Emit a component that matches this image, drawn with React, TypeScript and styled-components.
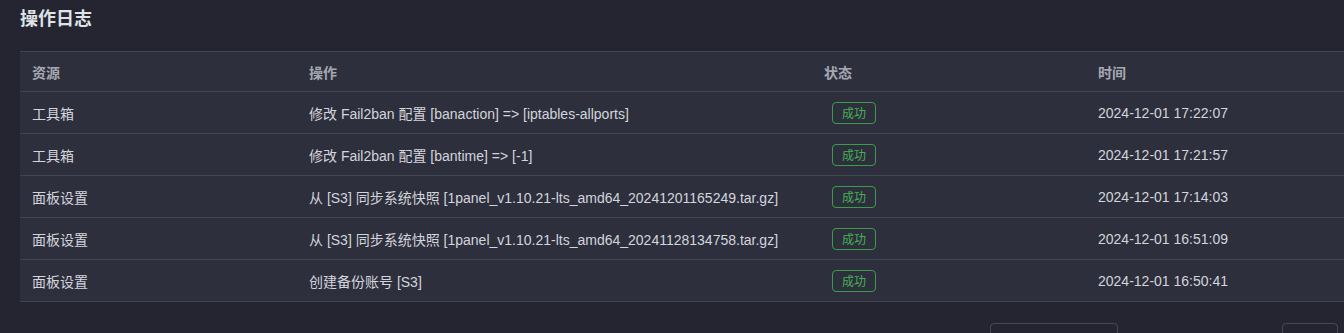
import styled, { createGlobalStyle } from 'styled-components'

const GlobalStyle = createGlobalStyle`
  html, body {
    margin: 0;
    padding: 0;
    background: #242530;
    overflow: hidden;
  }
  body {
    font-family: 'Liberation Sans', Arial, 'Noto Sans CJK SC', sans-serif;
  }
`

interface LogRow {
  source: string
  action: string
  status: string
  time: string
}

const logs: LogRow[] = [
  { source: '工具箱', action: '修改 Fail2ban 配置 [banaction] => [iptables-allports]', status: '成功', time: '2024-12-01 17:22:07' },
  { source: '工具箱', action: '修改 Fail2ban 配置 [bantime] => [-1]', status: '成功', time: '2024-12-01 17:21:57' },
  {
    source: '面板设置',
    action: '从 [S3] 同步系统快照 [1panel_v1.10.21-lts_amd64_20241201165249.tar.gz]',
    status: '成功',
    time: '2024-12-01 17:14:03',
  },
  {
    source: '面板设置',
    action: '从 [S3] 同步系统快照 [1panel_v1.10.21-lts_amd64_20241128134758.tar.gz]',
    status: '成功',
    time: '2024-12-01 16:51:09',
  },
  { source: '面板设置', action: '创建备份账号 [S3]', status: '成功', time: '2024-12-01 16:50:41' },
]

const columns = '277px 515px 274px 1fr'

export default function App() {
  return (
    <Page>
      <GlobalStyle />
      <Title>操作日志</Title>
      <Table>
        <HeaderRow>
          <HeadCell>资源</HeadCell>
          <HeadCell>操作</HeadCell>
          <HeadCell>状态</HeadCell>
          <HeadCell>时间</HeadCell>
        </HeaderRow>
        {logs.map((log, i) => (
          <Row key={i}>
            <Cell>{log.source}</Cell>
            <Cell>{log.action}</Cell>
            <Cell>
              <Tag>{log.status}</Tag>
            </Cell>
            <Cell>{log.time}</Cell>
          </Row>
        ))}
      </Table>
      <Pagination>
        <Total>共 5 条</Total>
        <SizeSelect>10条/页</SizeSelect>
        <PagerButton>‹</PagerButton>
        <PageNumber>1</PageNumber>
        <PagerButton>›</PagerButton>
        <Jumper>前往</Jumper>
        <JumpInput>1</JumpInput>
      </Pagination>
    </Page>
  )
}

const Page = styled.div`
  padding: 6px 0 0 20px;
`

const Title = styled.div`
  color: #dfe2e8;
  font-size: 18px;
  font-weight: 700;
  line-height: 26px;
  margin-bottom: 19px;
`

const Table = styled.div`
  width: 1344px;
  background: #2e2f3c;
  border-top: 1px solid #434452;
`

const HeaderRow = styled.div`
  display: grid;
  grid-template-columns: ${columns};
  height: 39px;
  border-bottom: 1px solid #434452;
`

const Row = styled.div`
  display: grid;
  grid-template-columns: ${columns};
  height: 41px;
  border-bottom: 1px solid #434452;
`

const HeadCell = styled.div`
  display: flex;
  align-items: center;
  padding: 0 12px;
  color: #a5a8b1;
  font-size: 14px;
  font-weight: 700;
`

const Cell = styled.div`
  display: flex;
  align-items: center;
  padding: 0 12px;
  color: #d2d5dc;
  font-size: 14px;
  white-space: nowrap;
`

const Tag = styled.span`
  display: inline-flex;
  align-items: center;
  justify-content: center;
  margin-left: 8px;
  width: 42px;
  height: 20px;
  border: 1px solid #3a9d4a;
  border-radius: 4px;
  color: #45b157;
  font-size: 12px;
`

const Pagination = styled.div`
  display: flex;
  align-items: center;
  justify-content: flex-end;
  gap: 0;
  margin-top: 21px;
  padding-right: 6px;
  height: 32px;
  color: #b8bbc3;
  font-size: 14px;
`

const Total = styled.span`
  margin-right: 10px;
`

const SizeSelect = styled.div`
  box-sizing: border-box;
  width: 128px;
  height: 32px;
  padding: 0 14px;
  display: flex;
  align-items: center;
  border: 1px solid #474856;
  border-radius: 4px;
  margin-right: 20px;
`

const PagerButton = styled.span`
  width: 32px;
  text-align: center;
  color: #7c7f88;
  font-size: 18px;
`

const PageNumber = styled.span`
  width: 32px;
  text-align: center;
  color: #3d8df5;
  font-weight: 700;
`

const Jumper = styled.span`
  margin-left: 16px;
  margin-right: 4px;
`

const JumpInput = styled.div`
  box-sizing: border-box;
  width: 56px;
  height: 32px;
  border: 1px solid #474856;
  border-radius: 4px;
  display: flex;
  align-items: center;
  justify-content: center;
`
